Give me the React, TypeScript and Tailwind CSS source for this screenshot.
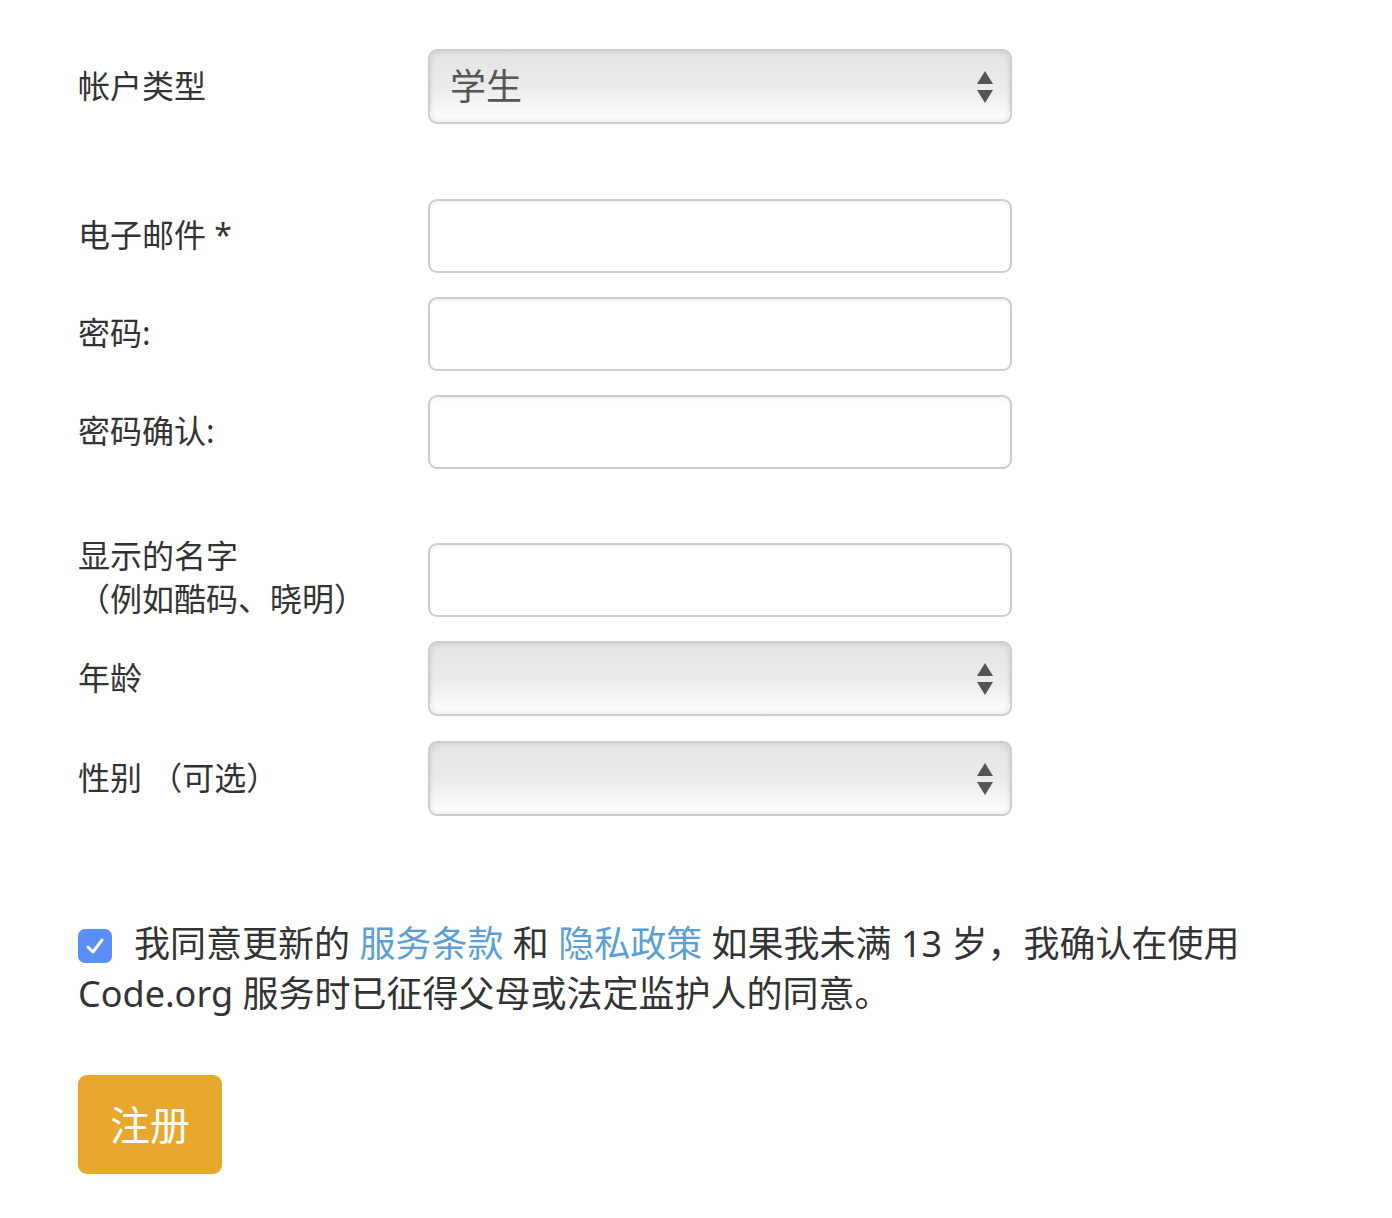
import React from "react";

const font = {
  fontFamily: '"Noto Sans", "Noto Sans CJK SC", sans-serif',
};

function Arrows() {
  return (
    <svg width="18" height="34" viewBox="0 0 18 34" className="absolute right-[16px] top-1/2 -translate-y-1/2">
      <path d="M9 1 L17 14 L1 14 Z" fill="#555" />
      <path d="M1 20 L17 20 L9 33 Z" fill="#555" />
    </svg>
  );
}

function SelectBox({ value }: { value?: string }) {
  return (
    <div className="relative w-[584px] h-[75px] rounded-[9px] border-2 border-[#cdcdcd] bg-gradient-to-b from-[#e4e4e4] via-[#ebebeb] to-white shadow-[inset_0_0_6px_rgba(0,0,0,0.12)] flex items-center pl-[20px]">
      <span className="text-[36px] text-[#555]">{value}</span>
      <Arrows />
    </div>
  );
}

function TextBox() {
  return (
    <div className="w-[584px] h-[74px] rounded-[9px] border-2 border-[#cdcdcd] bg-white shadow-[inset_0_2px_3px_rgba(0,0,0,0.06)]" />
  );
}

function Row({
  label,
  children,
  className = "",
  labelClass = "",
}: {
  label: React.ReactNode;
  children: React.ReactNode;
  className?: string;
  labelClass?: string;
}) {
  return (
    <div className={`flex items-center ${className}`}>
      <div className={`w-[350px] text-[32px] leading-[43px] text-[#333] ${labelClass}`}>{label}</div>
      {children}
    </div>
  );
}

export default function App() {
  return (
    <div style={font} className="bg-white min-h-[1218px] w-[1392px] pl-[78px] pt-[49px]">
      <Row label="帐户类型" labelClass="-mt-[3px]">
        <SelectBox value="学生" />
      </Row>

      <Row label="电子邮件 *" className="mt-[75px]" labelClass="-mt-[3px]">
        <TextBox />
      </Row>
      <Row label="密码:" className="mt-[24px]" labelClass="-mt-[3px]">
        <TextBox />
      </Row>
      <Row label="密码确认:" className="mt-[24px]" labelClass="-mt-[3px]">
        <TextBox />
      </Row>

      {/* 名字の行: 2行ラベルは入力欄より高いので余白を詰める */}
      <Row
        label={
          <>
            显示的名字
            <br />
            （例如酷码、晓明）
          </>
        }
        className="mt-[74px]"
        labelClass="-my-[6px] -mt-[12px]"
      >
        <TextBox />
      </Row>
      <Row label="年龄" className="mt-[24px]" labelClass="-mt-[3px]">
        <SelectBox />
      </Row>
      <Row label="性别 （可选）" className="mt-[25px]" labelClass="-mt-[3px]">
        <SelectBox />
      </Row>

      <div className="mt-[103px] w-[1200px] text-[36px] leading-[50px] text-[#333]">
        <span className="inline-flex align-[0px] mr-[22px] w-[34px] h-[34px] rounded-[7px] bg-[#5b8ef6] items-center justify-center">
          <svg width="22" height="22" viewBox="0 0 22 22">
            <path d="M4 12 L9 17 L18 5" stroke="white" strokeWidth="3" fill="none" strokeLinecap="round" strokeLinejoin="round" />
          </svg>
        </span>
        我同意更新的 <span className="text-[#5a9fd4]">服务条款</span> 和{" "}
        <span className="text-[#5a9fd4]">隐私政策</span> 如果我未满 13 岁，我确认在使用 Code.org
        服务时已征得父母或法定监护人的同意。
      </div>

      <button className="mt-[56px] w-[144px] h-[99px] rounded-[9px] bg-[#e8a82e] text-white text-[40px]">
        注册
      </button>
    </div>
  );
}
